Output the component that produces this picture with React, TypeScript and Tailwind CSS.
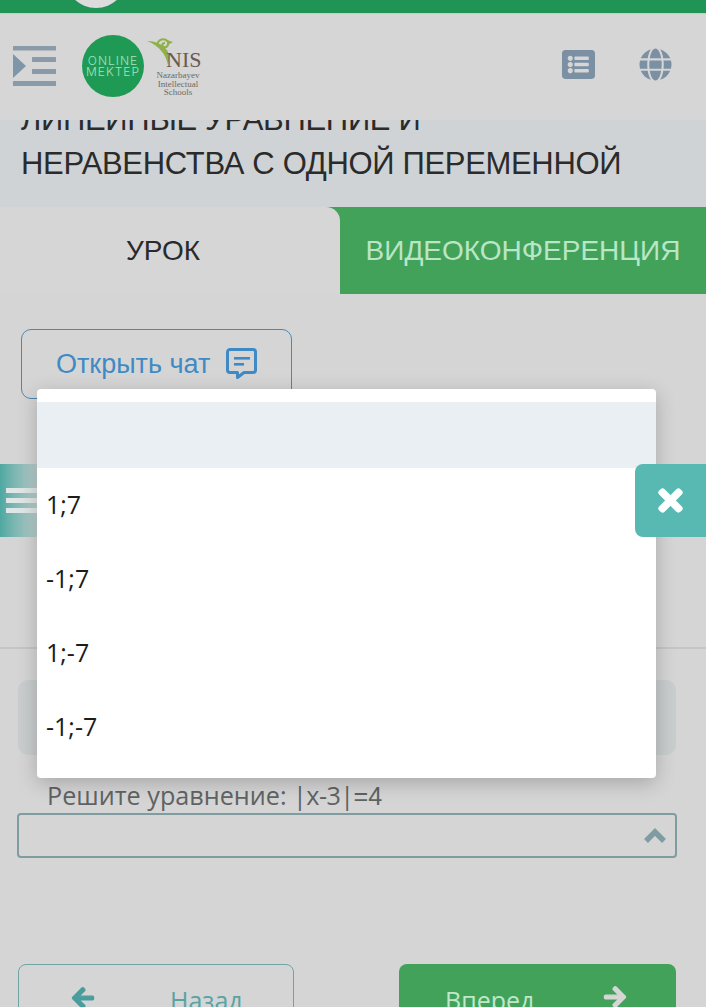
import { FaArrowLeft, FaArrowRight, FaGlobe, FaListAlt, FaTimes } from 'react-icons/fa';

const options = ['1;7', '-1;7', '1;-7', '-1;-7'];

function MenuIcon() {
  return (
    <svg width="43" height="40" viewBox="0 0 43 40" fill="#8b9aa8">
      <rect x="0" y="0" width="43" height="4.5" rx="0.5" />
      <rect x="19" y="11" width="24" height="5" rx="0.5" />
      <rect x="19" y="23" width="24" height="5" rx="0.5" />
      <rect x="0" y="35" width="43" height="5" rx="0.5" />
      <path d="M0 8 L13 20 L0 32 Z" fill="#7f95a8" />
    </svg>
  );
}

function ChatIcon() {
  return (
    <svg width="33" height="33" viewBox="0 0 33 33" fill="none">
      <path d="M5 2.5 H28 A2.5 2.5 0 0 1 30.5 5 V23 A2.5 2.5 0 0 1 28 25.5 H19 L12.5 30.5 V25.5 H5 A2.5 2.5 0 0 1 2.5 23 V5 A2.5 2.5 0 0 1 5 2.5 Z" stroke="#3f8ac4" strokeWidth="3" strokeLinejoin="round" />
      <rect x="9" y="10" width="16" height="2.6" fill="#3f8ac4" />
      <rect x="9" y="16" width="10" height="2.6" fill="#3f8ac4" />
    </svg>
  );
}

function Logos() {
  return (
    <div className="flex items-start gap-[3px]">
      <div className="w-[62px] h-[62px] rounded-full bg-[#1f9a55] flex flex-col items-center justify-center text-[#a5e2bf] text-[12px] leading-[11px] tracking-[1px] font-['Inter',sans-serif] font-light">
        <span>ONLINE</span>
        <span>MEKTEP</span>
      </div>
      <div className="relative w-[56px] h-[62px] font-['Liberation_Serif',serif] text-[#6b5a50]">
        <svg className="absolute left-0 top-[3px]" width="28" height="30" viewBox="0 0 28 30" fill="none">
          <path d="M21 27 C19 17 13 8 0 3 C8 3 15 6 19 11 C22 14 23 20 21 27 Z" fill="#8fb04a" />
          <path d="M11 8 C9 3 15 0 19 2 C23 4 21 10 17 9 C14 8 15 5 18 5" stroke="#8fb04a" strokeWidth="2" />
          <path d="M20 2 L26 4 L21 7 Z" fill="#8fb04a" />
        </svg>
        <span className="absolute left-[19px] top-[14px] text-[22px] leading-[22px]">NIS</span>
        <div className="absolute left-[10px] top-[36px] w-[42px] flex flex-col items-center text-[9px] leading-[8.5px] text-[#6f6a60]">
          <span>Nazarbayev</span>
          <span>Intellectual</span>
          <span>Schools</span>
        </div>
      </div>
    </div>
  );
}

export default function App() {
  return (
    <div className="relative w-[706px] h-[1007px] overflow-hidden bg-[#d5d5d5] font-['Liberation_Sans',sans-serif]">
      <div className="relative h-[14px] bg-[#1f9454] overflow-hidden border-b border-[#b5d8c0]">
        <div className="absolute left-[65px] -top-[54px] w-[62px] h-[62px] rounded-full bg-[#dcdcdc]" />
      </div>

      <header className="h-[106px] bg-[#d6d6d6] flex items-start justify-between pl-[13px] pr-[34px]">
        <div className="flex items-center gap-[26px] pt-[21px]">
          <MenuIcon />
          <Logos />
        </div>
        <div className="flex items-center gap-[44px] pt-[34px] text-[#7b90a3]">
          <FaListAlt size={33} />
          <FaGlobe size={33} />
        </div>
      </header>

      <div className="h-[87px] bg-[#cfd3d5] overflow-hidden flex flex-col justify-end pl-[21px] pb-[21px] text-[31px] leading-[44px] tracking-[-0.33px] text-[#2b2b2b] whitespace-nowrap font-light">
        <div>ЛИНЕЙНЫЕ УРАВНЕНИЕ И</div>
        <div>НЕРАВЕНСТВА С ОДНОЙ ПЕРЕМЕННОЙ</div>
      </div>

      <div className="flex h-[87px] bg-[#43a25a] text-[28px]">
        <div className="w-[340px] bg-[#d6d6d6] rounded-tr-[14px] flex items-center justify-center pt-[1px] pr-[14px] text-[#2a2a2a]">УРОК</div>
        <div className="flex-1 flex items-center justify-center pt-[1px] text-[#b9e6c6]">ВИДЕОКОНФЕРЕНЦИЯ</div>
      </div>

      <div className="px-[21px] pt-[35px]">
        <div className="w-[271px] h-[70px] border border-[#4b88b5] rounded-[10px] flex items-start gap-[15px] pl-[34px] pt-[17px] text-[#3f8ac4] text-[27px] leading-[34px]">
          <span>Открыть чат</span>
          <ChatIcon />
        </div>
      </div>

      <div className="mt-[248px] h-[2px] bg-[#c2c6c6]" />

      <div className="ml-[18px] w-[658px] mt-[31px] h-[75px] rounded-[10px] bg-[#c9cdcd]" />

      <div className="pl-[47px] mt-[23px] h-[35px] text-[25.2px] leading-[35px] text-[#5f6363] font-['Open_Sans',sans-serif] whitespace-nowrap">
        Решите уравнение: <span className="tracking-[-0.6px]">|x-3|</span><span className="font-['Liberation_Sans',sans-serif] font-light">=4</span>
      </div>

      <div className="ml-[17px] w-[660px] h-[45px] border-2 border-[#7f9da0] rounded-[4px] flex items-center justify-end pr-[8px]">
        <svg width="24" height="16" viewBox="0 0 24 16" fill="none">
          <path d="M3 13 L12 4 L21 13" stroke="#7f9da0" strokeWidth="5.5" />
        </svg>
      </div>

      <div className="flex justify-between items-start pl-[18px] pr-[30px] mt-[106px] font-['Open_Sans',sans-serif] text-[25px]">
        <div className="relative w-[276px] h-[70px] border border-[#6fa5a5] rounded-[8px] text-[#5aa3a3]">
          <FaArrowLeft size={24} strokeWidth={30} className="absolute left-[52px] top-[21px] text-[#4a9d9d]" />
          <span className="absolute left-[151px] top-[18px] leading-[34px]">Назад</span>
        </div>
        <div className="relative w-[277px] h-[70px] rounded-[8px] bg-[#43a25a] text-[#bfe8cb]">
          <span className="absolute left-[46px] top-[19px] leading-[34px]">Вперед</span>
          <FaArrowRight size={24} strokeWidth={30} className="absolute left-[204px] top-[21px] text-[#d6d6d6]" />
        </div>
      </div>

      <div className="absolute left-0 top-[464px] w-[37px] h-[73px] bg-gradient-to-r from-[#4da8a2] to-[#b9cdcb] flex flex-col justify-center gap-[5px] pl-[6px]">
        <div className="h-[5px] bg-[#dfe6e6]" />
        <div className="h-[5px] bg-[#dfe6e6]" />
        <div className="h-[5px] bg-[#dfe6e6]" />
      </div>

      <div className="absolute left-[37px] top-[389px] w-[619px] h-[389px] bg-white rounded-[4px] pt-[13px] shadow-[0_5px_20px_rgba(0,0,0,0.22)] font-['Open_Sans',sans-serif] text-[25px] text-[#1c1c1c]">
        <div className="h-[66px] bg-[#e9eff3]" />
        {options.map((o) => (
          <div key={o} className="h-[74px] pl-[9px] flex items-center">{o}</div>
        ))}
      </div>

      <div className="absolute left-[635px] top-[464px] w-[71px] h-[73px] bg-[#58b9b3] rounded-l-[8px] flex items-center justify-center text-white">
        <FaTimes size={33} strokeWidth={25} />
      </div>
    </div>
  );
}
